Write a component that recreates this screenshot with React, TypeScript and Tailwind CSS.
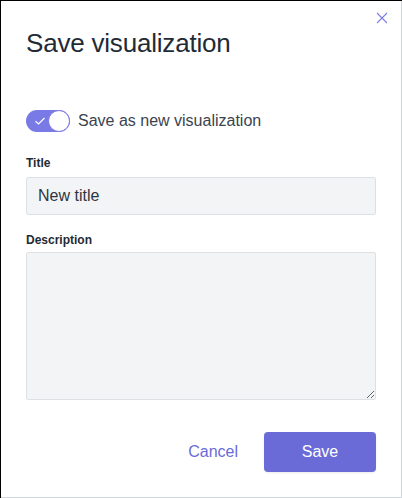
import { useState } from 'react'

function Toggle({ on, onChange }: { on: boolean; onChange: (v: boolean) => void }) {
  return (
    <button
      type="button"
      onClick={() => onChange(!on)}
      className={`relative h-[22px] w-[44px] rounded-full ${on ? 'bg-[#7a7ae6]' : 'bg-gray-300'}`}
    >
      {on && (
        <svg className="absolute left-[8px] top-[6px]" width="12" height="10" viewBox="0 0 12 10" fill="none">
          <path d="M1.5 5.2 L4.5 8 L10.5 2" stroke="white" strokeWidth="1.2" />
        </svg>
      )}
      <span
        className={`absolute top-0 h-[22px] w-[22px] rounded-full border border-[#7a7ae6] bg-white ${on ? 'right-0' : 'left-0'}`}
      />
    </button>
  )
}

export default function App() {
  const [asNew, setAsNew] = useState(true)
  const [title, setTitle] = useState('New title')

  return (
    <div className="h-[498px] w-[402px] border-l border-t border-black bg-black font-['Liberation_Sans',Arial,sans-serif]">
      <div className="relative flex h-[497px] w-[401px] flex-col border-b border-r border-[#cfd4da] bg-white px-[25px]">
        <button type="button" className="absolute right-[13px] top-[11px] text-[#7c7ce6]">
          <svg width="12" height="12" viewBox="0 0 12 12" fill="none">
            <path d="M1 1 L11 11 M11 1 L1 11" stroke="currentColor" strokeWidth="1.1" />
          </svg>
        </button>

        <h1 className="mt-[26px] text-[26px] leading-[32px] tracking-[-0.2px] text-[#1f2b36]">Save visualization</h1>

        <div className="mt-[50px] flex items-center gap-[8px]">
          <Toggle on={asNew} onChange={setAsNew} />
          <span className="text-[16px] text-[#3a4450]">Save as new visualization</span>
        </div>

        <label className="mt-[21px] text-[12px] font-bold text-[#1f2b36]">Title</label>
        <input
          value={title}
          onChange={e => setTitle(e.target.value)}
          className="mt-[5px] h-[38px] w-full rounded-[2px] border border-[#dde1e5] bg-[#f3f4f5] px-[11px] text-[16px] text-[#2d3640] outline-none"
        />

        <label className="mt-[16px] text-[12px] font-bold text-[#1f2b36]">Description</label>
        <textarea className="mt-[3px] h-[148px] w-full rounded-[2px] border border-[#dde1e5] bg-[#f3f4f5] px-[11px] py-[8px] text-[16px] text-[#2d3640] outline-none" />

        <div className="mt-[32px] flex items-center justify-end gap-[26px]">
          <button type="button" className="text-[16px] text-[#6b6bd6]">Cancel</button>
          <button
            type="button"
            className="h-[40px] w-[112px] rounded-[4px] bg-[#6a6bd6] text-[16px] text-white shadow-[0_1px_2px_rgba(0,0,0,0.08)]"
          >
            Save
          </button>
        </div>
      </div>
    </div>
  )
}
